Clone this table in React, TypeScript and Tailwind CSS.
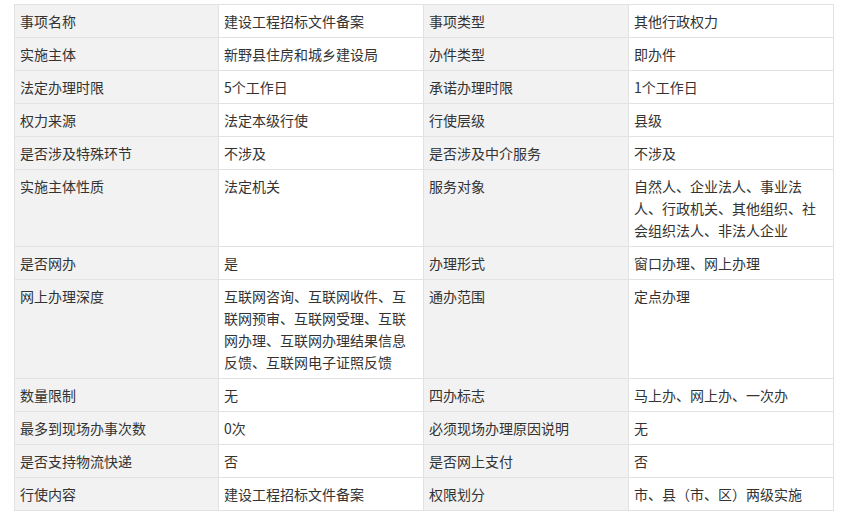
const rows: [string, string, string, string][] = [
  ["事项名称", "建设工程招标文件备案", "事项类型", "其他行政权力"],
  ["实施主体", "新野县住房和城乡建设局", "办件类型", "即办件"],
  ["法定办理时限", "5个工作日", "承诺办理时限", "1个工作日"],
  ["权力来源", "法定本级行使", "行使层级", "县级"],
  ["是否涉及特殊环节", "不涉及", "是否涉及中介服务", "不涉及"],
  [
    "实施主体性质",
    "法定机关",
    "服务对象",
    "自然人、企业法人、事业法人、行政机关、其他组织、社会组织法人、非法人企业",
  ],
  ["是否网办", "是", "办理形式", "窗口办理、网上办理"],
  [
    "网上办理深度",
    "互联网咨询、互联网收件、互联网预审、互联网受理、互联网办理、互联网办理结果信息反馈、互联网电子证照反馈",
    "通办范围",
    "定点办理",
  ],
  ["数量限制", "无", "四办标志", "马上办、网上办、一次办"],
  ["最多到现场办事次数", "0次", "必须现场办理原因说明", "无"],
  ["是否支持物流快递", "否", "是否网上支付", "否"],
  ["行使内容", "建设工程招标文件备案", "权限划分", "市、县（市、区）两级实施"],
];

export default function App() {
  return (
    <div className="min-h-[524px] bg-white pl-[14px] pt-[4px] font-['Noto_Sans_CJK_SC','Noto_Sans',sans-serif] text-[14px] leading-[22px] text-[#333]">
      <table className="w-[820px] table-fixed border-collapse">
        <colgroup>
          <col className="w-[204px]" />
          <col className="w-[205px]" />
          <col className="w-[205px]" />
          <col className="w-[205px]" />
        </colgroup>
        <tbody>
          {rows.map((r) => (
            <tr key={r[0]}>
              <td className="border border-[#e2e2e2] bg-[#f2f2f2] px-[5px] py-[5px] align-top">{r[0]}</td>
              <td className="border border-[#e2e2e2] px-[5px] py-[5px] align-top">{r[1]}</td>
              <td className="border border-[#e2e2e2] bg-[#f2f2f2] px-[5px] py-[5px] align-top">{r[2]}</td>
              <td className="border border-[#e2e2e2] px-[5px] py-[5px] align-top">{r[3]}</td>
            </tr>
          ))}
        </tbody>
      </table>
    </div>
  );
}
